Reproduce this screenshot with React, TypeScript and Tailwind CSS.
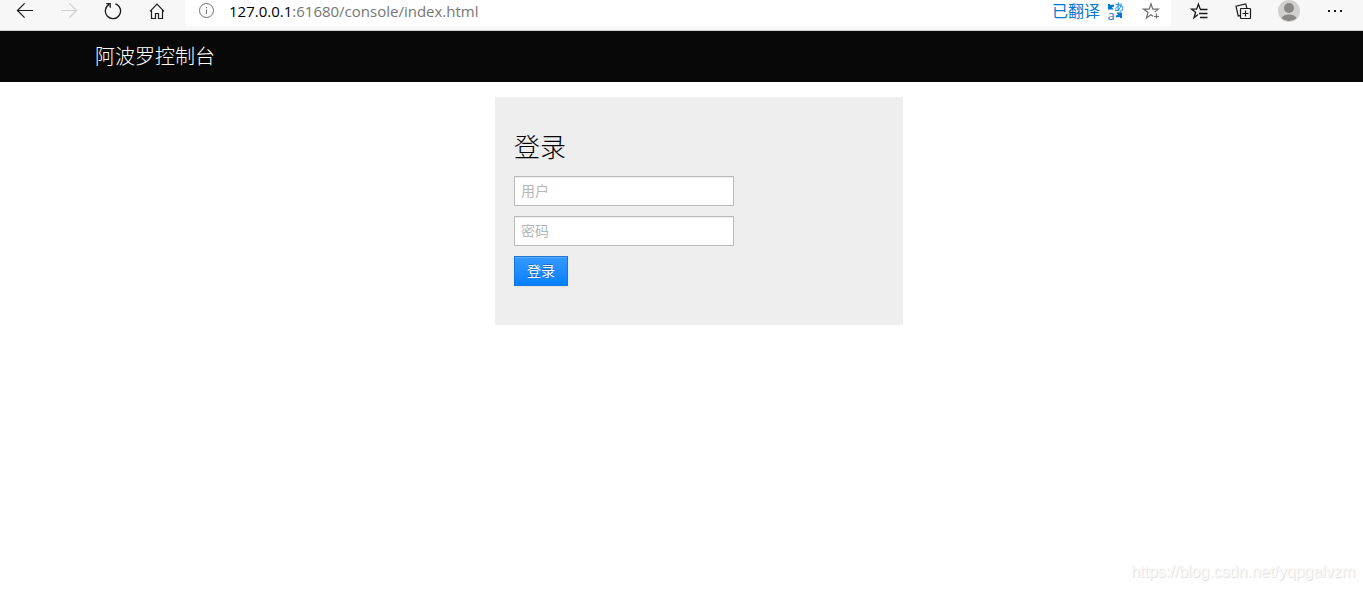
import type { ReactNode } from "react";

function ToolButton({ label, disabled, wide, children }: { label: string; disabled?: boolean; wide?: boolean; children: ReactNode }) {
  return (
    <button
      type="button"
      aria-label={label}
      disabled={disabled}
      className={`flex h-[22px] shrink-0 items-center justify-center text-[#1b1b1b] disabled:text-[#cfcfcf] ${wide ? "w-7" : "w-6"}`}
    >
      {children}
    </button>
  );
}

function ArrowIcon({ flip }: { flip?: boolean }) {
  return (
    <svg width="18" height="18" viewBox="0 0 18 18" fill="none" stroke="currentColor" strokeWidth="1.2" className={flip ? "-scale-x-100" : ""}>
      <path d="M17 8.5H1.6M8.6 1.3 1.4 8.5l7.2 7.2" />
    </svg>
  );
}

function ReloadIcon() {
  return (
    <svg width="18" height="18" viewBox="0 0 18 18" fill="none" stroke="currentColor" strokeWidth="1.3">
      <path d="M11.4 1.8A7.6 7.6 0 1 1 5.2 2.4" />
      <path d="M2.2 1.7h4v4" />
    </svg>
  );
}

function HomeIcon() {
  return (
    <svg width="18" height="18" viewBox="0 0 18 18" fill="none" stroke="currentColor" strokeWidth="1.2">
      <path d="M2 9.3 9 2.2l7 7.1M3.5 8v8.5h4v-5h3v5h4V8" />
    </svg>
  );
}

function InfoIcon() {
  return (
    <svg width="16" height="16" viewBox="0 0 16 16" fill="none" stroke="currentColor">
      <circle cx="7.5" cy="7.5" r="7" />
      <path d="M7.5 6.5V11M7.5 4v1.2" />
    </svg>
  );
}

function StarAddIcon() {
  return (
    <svg width="18" height="18" viewBox="0 0 18 18" fill="none" stroke="currentColor" strokeWidth="1.2">
      <path d="M11 14.2 9 12.8 4.4 16 6.1 10.4 1.6 7.1h5.6L9 1.8l1.8 5.3h5.6l-3.8 3" />
      <path d="M14.5 11.5v5M12 14.5h5" />
    </svg>
  );
}

function FavoritesIcon() {
  return (
    <svg width="18" height="18" viewBox="0 0 18 18" fill="none" stroke="currentColor" strokeWidth="1.3">
      <path d="M8 12.6 4 15.8 5.6 10.3 1.6 7.2h5L8.4 2.2l1.9 5" />
      <path d="M10 7.5h7.5M9 11.5h8.5M10 15.5h7.5" />
    </svg>
  );
}

function CollectionsIcon() {
  return (
    <svg width="18" height="18" viewBox="0 0 18 18" fill="none" stroke="currentColor" strokeWidth="1.2">
      <rect x="6.5" y="6.5" width="10" height="10" rx="0.5" />
      <path d="M11.5 8.5v6M8.5 11.5h6M6 13.6l-1.8.4L2 4.2l9.8-2.3 1 4.2" />
    </svg>
  );
}

function ProfileIcon() {
  return (
    <svg width="22" height="22" viewBox="0 0 22 22">
      <circle cx="11" cy="11" r="11" fill="#d2d0ce" />
      <circle cx="11" cy="8" r="5" fill="#8a8886" />
      <path d="M3.5 18.2C4.5 15.6 7.4 14.4 11 14.4s6.5 1.2 7.5 3.8A10.9 10.9 0 0 1 11 21a10.9 10.9 0 0 1-7.5-2.8Z" fill="#8a8886" />
    </svg>
  );
}

function TranslateMark() {
  return (
    <span aria-hidden="true" className="grid h-4 w-4 grid-cols-2 grid-rows-2 place-items-center text-[10px] leading-none">
      <svg width="6" height="6" viewBox="0 0 6 6" fill="currentColor">
        <path d="M0 0h2v1.3L3 .7h3v2L4 3l1.5 2.5H0Z" />
      </svg>
      <span>あ</span>
      <span className="text-[13px] leading-none">a</span>
      <svg width="6" height="6" viewBox="0 0 6 6" fill="currentColor">
        <path d="M6 6H4V4.7l-1 .6H0v-2L2 3 .5.5H6Z" />
      </svg>
    </span>
  );
}

function BrowserBar() {
  return (
    <header className="flex h-[31px] items-start border-b border-[#cfcfcf] bg-[#f7f7f7] font-['Open_Sans','Noto_Sans_CJK_SC',sans-serif]">
      <nav className="flex shrink-0 gap-5 pr-4 pl-[13px]">
        <ToolButton label="后退"><ArrowIcon /></ToolButton>
        <ToolButton label="前进" disabled><ArrowIcon flip /></ToolButton>
        <ToolButton label="刷新"><ReloadIcon /></ToolButton>
        <ToolButton label="主页"><HomeIcon /></ToolButton>
      </nav>
      <div className="flex h-[26px] min-w-0 flex-1 items-start rounded-b bg-white pr-2 pl-[14px]">
        <span className="flex h-[22px] items-center text-[#6e6e6e]"><InfoIcon /></span>
        <p className="ml-[14px] min-w-0 flex-1 truncate text-[15px] leading-[22px] text-[#767676]">
          <span className="text-black">127.0.0.1</span>:61680/console/index.html
        </p>
        <button type="button" className="mr-4 flex h-[22px] items-center gap-[7px] text-base leading-[22px] text-[#0078d4]">
          已翻译
          <TranslateMark />
        </button>
        <button type="button" aria-label="添加到收藏夹" className="flex h-[22px] w-6 items-center justify-center text-[#6e6e6e]"><StarAddIcon /></button>
      </div>
      <div className="flex shrink-0 gap-5 pr-4 pl-4">
        <ToolButton label="收藏夹"><FavoritesIcon /></ToolButton>
        <ToolButton label="集锦"><CollectionsIcon /></ToolButton>
        <ToolButton label="个人资料" wide><ProfileIcon /></ToolButton>
        <ToolButton label="更多">
          <svg width="16" height="16" viewBox="0 0 16 16" fill="currentColor">
            <path d="M1 7h2v2H1zM7 7h2v2H7zM13 7h2v2h-2z" />
          </svg>
        </ToolButton>
      </div>
    </header>
  );
}

function Field({ name, label, type }: { name: string; label: string; type: string }) {
  return (
    <input
      name={name}
      type={type}
      aria-label={label}
      placeholder={label}
      className="mb-[10px] block h-[30px] w-[220px] border border-[#bbbbbb] bg-white px-[6px] pb-[2px] text-sm leading-6 text-[#555555] shadow-[inset_0_1px_1px_rgba(0,0,0,0.075)] placeholder:text-[#b5b5b5]"
    />
  );
}

export default function App() {
  return (
    <div className="flex min-h-screen flex-col bg-white font-['Noto_Sans_CJK_SC',sans-serif]">
      <BrowserBar />
      <div className="bg-[#080808]">
        <div className="mx-auto flex h-[51px] w-full max-w-[1173px] items-center pb-[2px]">
          <a href="#" className="text-xl leading-8 font-light text-white">阿波罗控制台</a>
        </div>
      </div>
      <main className="mx-auto w-full max-w-[1173px] flex-1 pt-[15px]">
        <form className="ml-[400px] w-[408px] bg-[#eeeeee] px-[19px] pt-[29px] pb-[39px]" onSubmit={(event) => event.preventDefault()}>
          <h1 className="mb-[10px] text-[26px] leading-10 font-extralight text-black">登录</h1>
          <Field name="username" label="用户" type="text" />
          <Field name="password" label="密码" type="password" />
          <button
            type="submit"
            className="flex h-[30px] w-[54px] items-center justify-center border border-[#1a76de] bg-linear-to-b from-[#3399ff] to-[#0080ff] pb-[2px] text-sm leading-6 text-white shadow-[inset_0_1px_0_rgba(255,255,255,0.2),0_1px_2px_rgba(0,0,0,0.05)] [text-shadow:0_-1px_0_rgba(0,0,0,0.25)]"
          >
            登录
          </button>
        </form>
      </main>
      <footer className="flex justify-end pr-2 pb-2 font-['Liberation_Sans',sans-serif] text-base leading-5 text-[#fafafa] [text-shadow:1px_1px_1px_#dddddd]">
        https://blog.csdn.net/yqpgalvzm
      </footer>
    </div>
  );
}
